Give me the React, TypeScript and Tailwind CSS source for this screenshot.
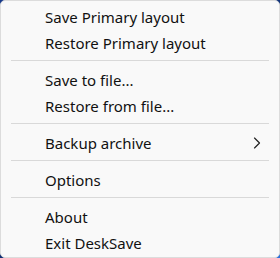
import { ChevronRight } from "lucide-react";

type Item = { label: string; submenu?: boolean };

const groups: Item[][] = [
  [{ label: "Save Primary layout" }, { label: "Restore Primary layout" }],
  [{ label: "Save to file..." }, { label: "Restore from file..." }],
  [{ label: "Backup archive", submenu: true }],
  [{ label: "Options" }],
  [{ label: "About" }, { label: "Exit DeskSave" }],
];

function MenuRow({ item }: { item: Item }) {
  return (
    <div className="h-[26px] flex items-center pl-[44px] pr-[12px] text-[15px] text-[#111] cursor-default">
      <span className="flex-1 leading-none">{item.label}</span>
      {item.submenu && (
        <ChevronRight size={20} strokeWidth={1.4} className="text-[#222]" />
      )}
    </div>
  );
}

export default function App() {
  return (
    <div className="w-[280px] h-[258px] bg-[linear-gradient(135deg,#183a8a,#0d2a6b_45%,#2a70d8)] font-['Noto_Sans',sans-serif]">
      <div className="w-full h-full rounded-[5px] bg-[#f9f9f9] border border-[#dcdcdc] pt-[3px] flex flex-col">
        {groups.map((group, gi) => (
          <div key={gi}>
            {gi > 0 && (
              <div className="pt-[4px] pb-[6px] px-[10px]">
                <div className="h-px bg-[#d9d9d9]" />
              </div>
            )}
            {group.map((item) => (
              <MenuRow key={item.label} item={item} />
            ))}
          </div>
        ))}
      </div>
    </div>
  );
}
